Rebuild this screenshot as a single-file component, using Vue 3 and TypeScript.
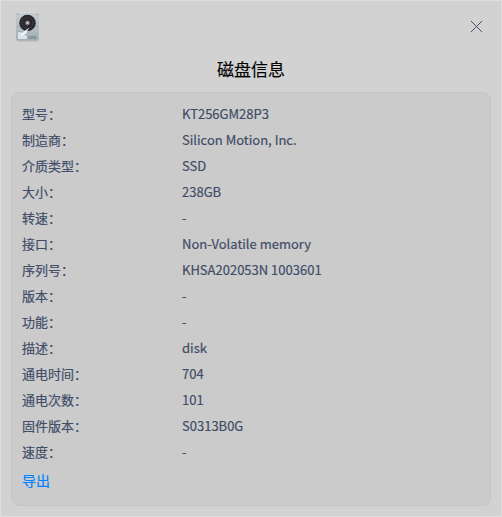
<script setup lang="ts">
interface Row { label: string; value: string }
const rows: Row[] = [
  { label: '型号：', value: 'KT256GM28P3' },
  { label: '制造商：', value: 'Silicon Motion, Inc.' },
  { label: '介质类型：', value: 'SSD' },
  { label: '大小：', value: '238GB' },
  { label: '转速：', value: '-' },
  { label: '接口：', value: 'Non-Volatile memory' },
  { label: '序列号：', value: 'KHSA202053N 1003601' },
  { label: '版本：', value: '-' },
  { label: '功能：', value: '-' },
  { label: '描述：', value: 'disk' },
  { label: '通电时间：', value: '704' },
  { label: '通电次数：', value: '101' },
  { label: '固件版本：', value: 'S0313B0G' },
  { label: '速度：', value: '-' },
]
</script>

<template>
  <main class="dialog">
    <header class="titlebar">
      <svg class="disk" width="25" height="31" viewBox="0 0 24 30">
        <defs>
          <linearGradient id="plate" x1="0" y1="0" x2="0" y2="1">
            <stop offset="0" stop-color="#c8cdd0" />
            <stop offset="1" stop-color="#a3b0b8" />
          </linearGradient>
        </defs>
        <rect x="1" y="2" width="22" height="27.6" rx="2" fill="#000" opacity=".12" />
        <rect x="1" y="1" width="22" height="27.6" rx="2" fill="url(#plate)" />
        <path d="M2.5 1.4h19" stroke="#dde1e3" stroke-width=".7" />
        <g fill="#7f8b92">
          <circle cx="2.7" cy="3" r=".7" /><circle cx="21.3" cy="3" r=".7" />
          <circle cx="2.7" cy="15" r=".6" /><circle cx="21.3" cy="15" r=".6" />
        </g>
        <circle cx="12" cy="11.6" r="8" fill="#29282c" />
        <circle cx="12" cy="11.6" r="5.3" fill="none" stroke="#434047" stroke-width=".8" />
        <circle cx="12" cy="11.6" r="2.4" fill="#77767b" />
        <circle cx="12" cy="11.6" r="1.1" fill="#dedede" />
        <path d="M2.2 20h4l1.4 3h4.2v4.6H2.2z" fill="#dbe4e9" stroke="#8e9ca5" stroke-width=".6" />
        <path d="M13.6 16.2 5.3 22.2 6.8 24.2 10.4 22z" fill="#f3f5f6" />
        <path d="M13 24h7.5v3.2H13z" fill="#83919a" />
        <path d="M15 24v3.2M17.5 24v3.2" stroke="#a9b5bc" stroke-width=".6" />
      </svg>
      <svg class="close" width="11" height="11" viewBox="0 0 11 11">
        <path d="M0 0 11 11M11 0 0 11" stroke="#414d68" fill="none" />
      </svg>
    </header>
    <h1>磁盘信息</h1>
    <section class="card">
      <dl>
        <div v-for="row in rows" :key="row.label" class="row">
          <dt>{{ row.label }}</dt>
          <dd>{{ row.value }}</dd>
        </div>
      </dl>
      <a class="export">导出</a>
    </section>
  </main>
</template>

<style>
body { margin: 0; }
</style>
<style scoped>
.dialog { box-sizing: border-box; width: 502px; height: 517px; background: #d2d2d2; border: 1px solid #dedede; padding: 0 10px 10px; font-family: "Noto Sans CJK SC", sans-serif; display: flex; flex-direction: column; }
.titlebar { height: 51px; display: flex; align-items: center; justify-content: space-between; padding: 0 9px 0 4px; }
h1 { margin: 0; height: 40px; line-height: 34px; text-align: center; font-size: 17px; font-weight: 400; color: #000; -webkit-text-stroke: .15px #000; }
.card { box-sizing: border-box; flex: 1; border: 1px solid #c5c5c5; border-radius: 8px; background: #cbcbcb; padding: 8px 10px; }
dl { margin: 0; }
.row { display: grid; grid-template-columns: 160px 1fr; height: 26px; line-height: 26px; font-size: 13px; color: #414d68; -webkit-text-stroke: .2px #414d68; }
dt { font-weight: 400; }
dd { margin: 0; }
.export { display: block; font-size: 14px; line-height: 31px; color: #0081ff; -webkit-text-stroke: .2px #0081ff; }
</style>
